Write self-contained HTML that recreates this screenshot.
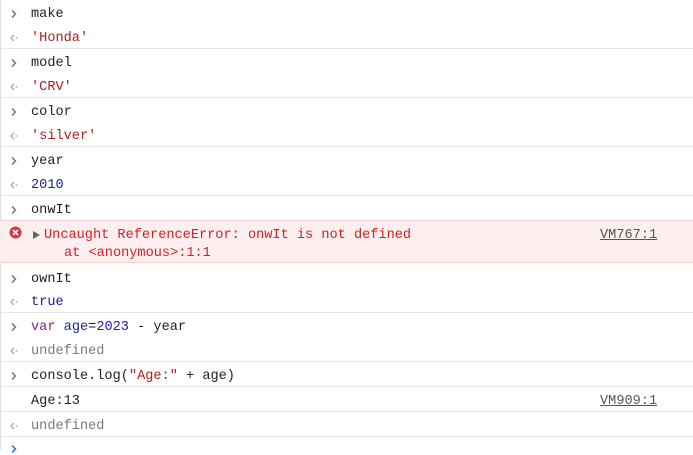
<!DOCTYPE html>
<html><head><style>
body{margin:0;width:693px;height:450px;background:#fff;position:relative;overflow:hidden;font-family:"Liberation Mono",monospace;font-size:13.6px;color:#222}
.l{position:absolute;left:31px;white-space:pre;line-height:16px;margin-top:2px}
.sep{position:absolute;left:0;width:693px;height:1px;background:#e6e6e6}
.ic{position:absolute;left:8px;margin-top:3px}
.str{color:#b51d1d}.num{color:#1c1ca8}.kw{color:#8a1f8a}.g{color:#7a7a7a}
.src{position:absolute;left:600px;text-decoration:underline;color:#555;line-height:16px;margin-top:2px}
</style></head><body>
<svg width="0" height="0" style="position:absolute"><defs>
<symbol id="gt" viewBox="0 0 12 12"><path d="M4 2.5L7.5 6L4 9.5" fill="none" stroke="#777" stroke-width="1.5"/></symbol>
<symbol id="lt" viewBox="0 0 12 12"><path d="M6 3L3 6L6 9" fill="none" stroke="#aaa" stroke-width="1.3"/><circle cx="8.5" cy="6" r="0.9" fill="#aaa"/></symbol>
</defs></svg>
<div style="position:absolute;left:0;top:0;width:1px;height:450px;background:#ddd"></div>
<svg class="ic" style="top:5px" width="12" height="12"><use href="#gt"/></svg><div class="l" style="top:5px">make</div>
<svg class="ic" style="top:29px" width="12" height="12"><use href="#lt"/></svg><div class="l str" style="top:29px">'Honda'</div>
<div class="sep" style="top:48px"></div>
<svg class="ic" style="top:54px" width="12" height="12"><use href="#gt"/></svg><div class="l" style="top:54px">model</div>
<svg class="ic" style="top:78px" width="12" height="12"><use href="#lt"/></svg><div class="l str" style="top:78px">'CRV'</div>
<div class="sep" style="top:97px"></div>
<svg class="ic" style="top:103px" width="12" height="12"><use href="#gt"/></svg><div class="l" style="top:103px">color</div>
<svg class="ic" style="top:127px" width="12" height="12"><use href="#lt"/></svg><div class="l str" style="top:127px">'silver'</div>
<div class="sep" style="top:146px"></div>
<svg class="ic" style="top:152px" width="12" height="12"><use href="#gt"/></svg><div class="l" style="top:152px">year</div>
<svg class="ic" style="top:176px" width="12" height="12"><use href="#lt"/></svg><div class="l num" style="top:176px">2010</div>
<div class="sep" style="top:195px"></div>
<svg class="ic" style="top:201px" width="12" height="12"><use href="#gt"/></svg><div class="l" style="top:201px">onwIt</div>
<div style="position:absolute;left:0;top:220px;width:693px;height:43px;background:#fdeff0;border-top:1px solid #f6d3d3;border-bottom:1px solid #f6d3d3;box-sizing:border-box"></div>
<svg style="position:absolute;left:9px;top:226px" width="13" height="13"><circle cx="6.5" cy="6.5" r="6" fill="#d9363e"/><path d="M4 4L9 9M9 4L4 9" stroke="#fff" stroke-width="1.6"/></svg>
<div style="position:absolute;left:33px;top:231px;width:0;height:0;border-left:7px solid #666;border-top:4px solid transparent;border-bottom:4px solid transparent"></div>
<div class="l" style="left:44px;top:226px;color:#d42020">Uncaught ReferenceError: onwIt is not defined</div>
<div class="l" style="left:64px;top:244px;color:#d42020">at &lt;anonymous&gt;:1:1</div>
<div class="src" style="top:226px">VM767:1</div>
<svg class="ic" style="top:270px" width="12" height="12"><use href="#gt"/></svg><div class="l" style="top:270px">ownIt</div>
<svg class="ic" style="top:293px" width="12" height="12"><use href="#lt"/></svg><div class="l num" style="top:293px">true</div>
<div class="sep" style="top:312px"></div>
<svg class="ic" style="top:318px" width="12" height="12"><use href="#gt"/></svg><div class="l" style="top:318px"><span class="kw">var</span> <span style="color:#222299">age</span>=<span class="num">2023</span> - year</div>
<svg class="ic" style="top:342px" width="12" height="12"><use href="#lt"/></svg><div class="l g" style="top:342px">undefined</div>
<div class="sep" style="top:361px"></div>
<svg class="ic" style="top:367px" width="12" height="12"><use href="#gt"/></svg><div class="l" style="top:367px">console.log(<span class="str">"Age:"</span> + age)</div>
<div class="sep" style="top:386px"></div>
<div class="l" style="top:392px">Age:13</div>
<div class="src" style="top:392px">VM909:1</div>
<div class="sep" style="top:411px"></div>
<svg class="ic" style="top:417px" width="12" height="12"><use href="#lt"/></svg><div class="l g" style="top:417px">undefined</div>
<div class="sep" style="top:436px"></div>
<svg class="ic" style="top:440px" width="12" height="12"><path d="M4 2.5L7.5 6L4 9.5" fill="none" stroke="#2a6fd6" stroke-width="1.5"/></svg>
</body></html>
